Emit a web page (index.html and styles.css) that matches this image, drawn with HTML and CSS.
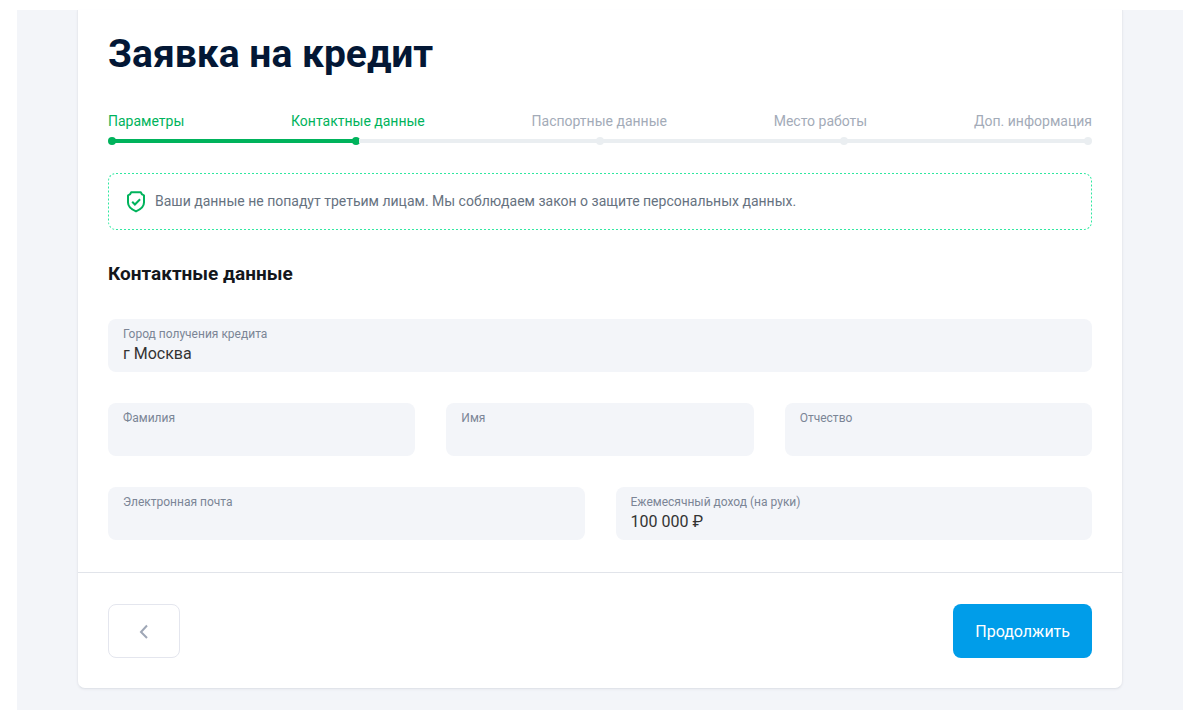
FILE: index.html
```html
<!DOCTYPE html>
<html lang="ru">
<head>
<meta charset="utf-8">
<meta name="viewport" content="width=device-width, initial-scale=1">
<title>Заявка на кредит</title>
<link rel="stylesheet" href="styles.css">
</head>
<body>
<main class="page">
  <form class="card">
    <div class="card-body">
      <h1 class="title">Заявка на кредит</h1>

      <div class="steps">
        <ol class="step-labels">
          <li class="step done">Параметры</li>
          <li class="step done" aria-current="step">Контактные данные</li>
          <li class="step">Паспортные данные</li>
          <li class="step">Место работы</li>
          <li class="step">Доп. информация</li>
        </ol>
        <div class="track" aria-hidden="true">
          <span class="dot done"></span>
          <span class="line done"></span>
          <span class="dot done"></span>
          <span class="line"></span>
          <span class="dot"></span>
          <span class="line"></span>
          <span class="dot"></span>
          <span class="line"></span>
          <span class="dot"></span>
        </div>
      </div>

      <div class="notice">
        <svg class="notice-frame" aria-hidden="true">
          <rect class="notice-outline" x="0" y="0" width="100%" height="100%" rx="8"/>
        </svg>
        <svg class="shield" viewBox="0 0 20 22" fill="none" aria-hidden="true">
          <path d="M5.200 1.200h9.600c.4 1.700 1.500 2.800 3.200 3.200v7.200c0 4.200-3.600 7-8 8.800-4.400-1.800-8-4.600-8-8.800V4.400c1.700-.4 2.800-1.500 3.200-3.200z" stroke="#00b35c" stroke-width="2" stroke-linejoin="round"/>
          <path d="M6.200 10.800l2.700 2.700 5.200-5.200" stroke="#00b35c" stroke-width="2"/>
        </svg>
        <p class="notice-text">Ваши данные не попадут третьим лицам. Мы соблюдаем закон о защите персональных данных.</p>
      </div>

      <h2 class="subtitle">Контактные данные</h2>

      <div class="fields">
        <div class="field wide">
          <label class="field-label" for="city">Город получения кредита</label>
          <input class="field-input" id="city" type="text" value="г Москва">
        </div>
        <div class="field third">
          <label class="field-label" for="surname">Фамилия</label>
          <input class="field-input" id="surname" type="text">
        </div>
        <div class="field third">
          <label class="field-label" for="name">Имя</label>
          <input class="field-input" id="name" type="text">
        </div>
        <div class="field third">
          <label class="field-label" for="patronymic">Отчество</label>
          <input class="field-input" id="patronymic" type="text">
        </div>
        <div class="field half">
          <label class="field-label" for="email">Электронная почта</label>
          <input class="field-input" id="email" type="email">
        </div>
        <div class="field half">
          <label class="field-label" for="income">Ежемесячный доход (на руки)</label>
          <input class="field-input" id="income" type="text" value="100 000 ₽">
        </div>
      </div>
    </div>

    <div class="card-footer">
      <button class="button back" type="button" aria-label="Назад">
        <svg class="chevron" viewBox="0 0 10 16" fill="none" aria-hidden="true">
          <path d="M8 2.500L2 9l6 6" stroke="#9fa7b6" stroke-width="2"/>
        </svg>
      </button>
      <button class="button next" type="submit">Продолжить</button>
    </div>
  </form>
</main>
</body>
</html>
```

FILE: styles.css
```css
*,
*::before,
*::after {
  box-sizing: border-box;
}

body {
  margin: 0;
  background: #fff;
  font-family: Roboto, "Liberation Sans", sans-serif;
}

.page {
  margin: 10px 17px;
  padding: 0 60px 21px;
  background: #f3f5f9;
}

.card {
  background: #fff;
  border: 1px solid #e9ebf0;
  border-top: 0;
  border-bottom-color: #e1e4ea;
  border-radius: 0 0 8px 8px;
  box-shadow: 0 1px 2px #e9ebf0;
}

.card-body {
  padding: 20px 30px 32px;
}

.title {
  margin: 0;
  color: #031735;
  font-size: 39px;
  font-weight: 700;
  line-height: 48px;
}

.steps {
  margin-top: 33px;
}

.step-labels {
  display: flex;
  justify-content: space-between;
  margin: 0;
  padding: 0;
  list-style: none;
}

.step {
  color: #a3abb8;
  font-size: 14px;
  line-height: 20px;
}

.step.done {
  color: #00b35c;
}

.track {
  display: flex;
  align-items: center;
  margin-top: 6px;
}

.dot {
  flex: none;
  width: 8px;
  height: 8px;
  border-radius: 50%;
  background: #eaeef1;
}

.line {
  flex: 1;
  height: 4px;
  margin: 0 -1px;
  background: #eaeef1;
}

.dot.done,
.line.done {
  background: #00b35c;
}

.notice {
  position: relative;
  display: flex;
  align-items: center;
  gap: 9px;
  margin-top: 28px;
  padding: 17px 18px;
}

.notice-frame {
  position: absolute;
  inset: 0;
  width: 100%;
  height: 100%;
  border-radius: 8px;
}

.notice-outline {
  fill: none;
  stroke: #2fe8a0;
  stroke-width: 2px;
  stroke-dasharray: 2 2;
}

.shield {
  flex: none;
  width: 20px;
  height: 22px;
}

.notice-text {
  margin: 0;
  color: #66727f;
  font-size: 14px;
  line-height: 23px;
}

.subtitle {
  margin: 32px 0 0;
  color: #14171c;
  font-size: 19px;
  font-weight: 700;
  line-height: 24px;
}

.fields {
  display: grid;
  grid-template-columns: repeat(6, 1fr);
  gap: 31px;
  margin-top: 33px;
}

.field {
  padding: 7px 15px 8px;
  border-radius: 8px;
  background: #f3f5f9;
}

.wide {
  grid-column: span 6;
}

.third {
  grid-column: span 2;
}

.half {
  grid-column: span 3;
}

.field-label {
  display: block;
  color: #7b8596;
  font-size: 12px;
  line-height: 16px;
}

.field-input {
  display: block;
  width: 100%;
  height: 22px;
  padding: 0;
  border: 0;
  outline: 0;
  background: none;
  color: #333;
  font-family: inherit;
  font-size: 16px;
}

.card-footer {
  display: flex;
  justify-content: space-between;
  padding: 31px 30px 30px;
  border-top: 1px solid #e1e4ea;
}

.button {
  display: flex;
  align-items: center;
  justify-content: center;
  height: 54px;
  border-radius: 8px;
  font-family: inherit;
  font-size: 16px;
  cursor: pointer;
}

.back {
  padding: 0 30px;
  border: 1px solid #e4e6ee;
  background: #fff;
}

.chevron {
  width: 10px;
  height: 16px;
}

.next {
  padding: 0 22px;
  border: 0;
  background: #009de9;
  color: #fff;
}
```
